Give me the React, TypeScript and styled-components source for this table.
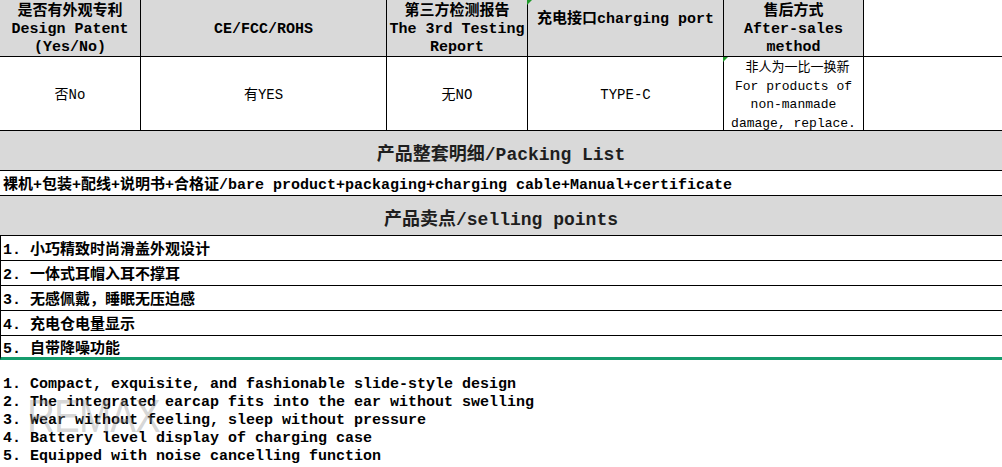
import styled, { createGlobalStyle } from "styled-components";

const GlobalStyle = createGlobalStyle`
  * { box-sizing: border-box; }
  body {
    margin: 0;
    background: #ffffff;
    font-family: "Liberation Mono", "Noto Sans CJK SC", monospace;
    color: #000;
  }
`;

const Sheet = styled.div`
  width: 1002px;
  height: 467px;
  overflow: hidden;
  position: relative;
  background: #fff;
`;

const SpecGrid = styled.div`
  display: grid;
  grid-template-columns: 141px 246px 141px 196px 140px 1fr;
  grid-template-rows: 57px 74px;
`;

const HeadCell = styled.div<{ $blank?: boolean; $top?: boolean }>`
  position: relative;
  display: flex;
  flex-direction: column;
  align-items: center;
  justify-content: ${(p) => (p.$top ? "flex-start" : "center")};
  padding-top: ${(p) => (p.$top ? "11px" : "3px")};
  background: ${(p) => (p.$blank ? "#fff" : "#d9d9d9")};
  border-bottom: 1px solid #000;
  border-right: ${(p) => (p.$blank ? "none" : "1px solid #000")};
  font-weight: bold;
  font-size: 15px;
  line-height: 18px;
  text-align: center;
  white-space: nowrap;
`;

const DataCell = styled.div<{ $blank?: boolean; $small?: boolean }>`
  position: relative;
  display: flex;
  flex-direction: column;
  align-items: center;
  justify-content: center;
  background: #fff;
  border-bottom: 1px solid #000;
  border-right: ${(p) => (p.$blank ? "none" : "1px solid #000")};
  font-size: ${(p) => (p.$small ? "13px" : "14px")};
  line-height: 18.5px;
  text-align: center;
  white-space: nowrap;
  padding-top: ${(p) => (p.$small ? "5px" : "3px")};
`;

const Flag = styled.span`
  position: absolute;
  top: 0;
  left: -1px;
  width: 0;
  height: 0;
  border-top: 5px solid #1f9a2a;
  border-right: 5px solid transparent;
`;

const SectionTitle = styled.div`
  height: 40px;
  background: #d9d9d9;
  border-bottom: 1px solid #000;
  display: flex;
  align-items: center;
  justify-content: center;
  font-size: 18px;
  font-weight: bold;
  color: #1e1e1e;
  padding-top: 2px;
`;

const LineRow = styled.div<{ $edge?: boolean }>`
  height: 25px;
  border-bottom: 1px solid #000;
  border-left: ${(p) => (p.$edge ? "1px solid #000" : "none")};
  display: flex;
  align-items: center;
  padding-left: ${(p) => (p.$edge ? "2px" : "3px")};
  font-size: 15px;
  font-weight: bold;
  white-space: nowrap;
`;

const LastRow = styled(LineRow)`
  height: 24px;
  border-bottom: 3px solid #159c6d;
`;

const EnglishBlock = styled.div`
  position: relative;
  padding: 16px 0 0 3px;
  font-size: 15px;
  font-weight: bold;
  line-height: 18px;
  white-space: pre;
`;

const Watermark = styled.span`
  position: absolute;
  left: 27px;
  top: 32px;
  font-family: "Liberation Sans", Arial, sans-serif;
  font-weight: 400;
  font-size: 47px;
  line-height: 1;
  letter-spacing: -1px;
  color: rgba(150, 150, 150, 0.4);
  transform: scaleX(0.82);
  transform-origin: left top;
  pointer-events: none;
`;

const points = [
  "1. 小巧精致时尚滑盖外观设计",
  "2. 一体式耳帽入耳不撑耳",
  "3. 无感佩戴，睡眠无压迫感",
  "4. 充电仓电量显示",
];

const english = [
  "1. Compact, exquisite, and fashionable slide-style design",
  "2. The integrated earcap fits into the ear without swelling",
  "3. Wear without feeling, sleep without pressure",
  "4. Battery level display of charging case",
  "5. Equipped with noise cancelling function",
];

export default function App() {
  return (
    <Sheet>
      <GlobalStyle />
      <SpecGrid>
        <HeadCell>
          <span>是否有外观专利</span>
          <span>Design Patent</span>
          <span>(Yes/No)</span>
        </HeadCell>
        <HeadCell>CE/FCC/ROHS</HeadCell>
        <HeadCell>
          <span>第三方检测报告</span>
          <span>The 3rd Testing</span>
          <span>Report</span>
        </HeadCell>
        <HeadCell $top>
          <Flag />
          <span>充电接口charging port</span>
        </HeadCell>
        <HeadCell>
          <span>售后方式</span>
          <span>After-sales</span>
          <span>method</span>
        </HeadCell>
        <HeadCell $blank />

        <DataCell>否No</DataCell>
        <DataCell>有YES</DataCell>
        <DataCell>无NO</DataCell>
        <DataCell>TYPE-C</DataCell>
        <DataCell $small>
          <Flag />
          <span>&nbsp;非人为一比一换新</span>
          <span>For products of</span>
          <span>non-manmade</span>
          <span>damage, replace.</span>
        </DataCell>
        <DataCell $blank />
      </SpecGrid>

      <SectionTitle>产品整套明细/Packing List</SectionTitle>
      <LineRow>
        裸机+包装+配线+说明书+合格证/bare product+packaging+charging cable+Manual+certificate
      </LineRow>
      <SectionTitle>产品卖点/selling points</SectionTitle>
      {points.map((p) => (
        <LineRow key={p} $edge>
          {p}
        </LineRow>
      ))}
      <LastRow $edge>5. 自带降噪功能</LastRow>

      <EnglishBlock>
        {english.join("\n")}
        <Watermark>REMAX</Watermark>
      </EnglishBlock>
    </Sheet>
  );
}
